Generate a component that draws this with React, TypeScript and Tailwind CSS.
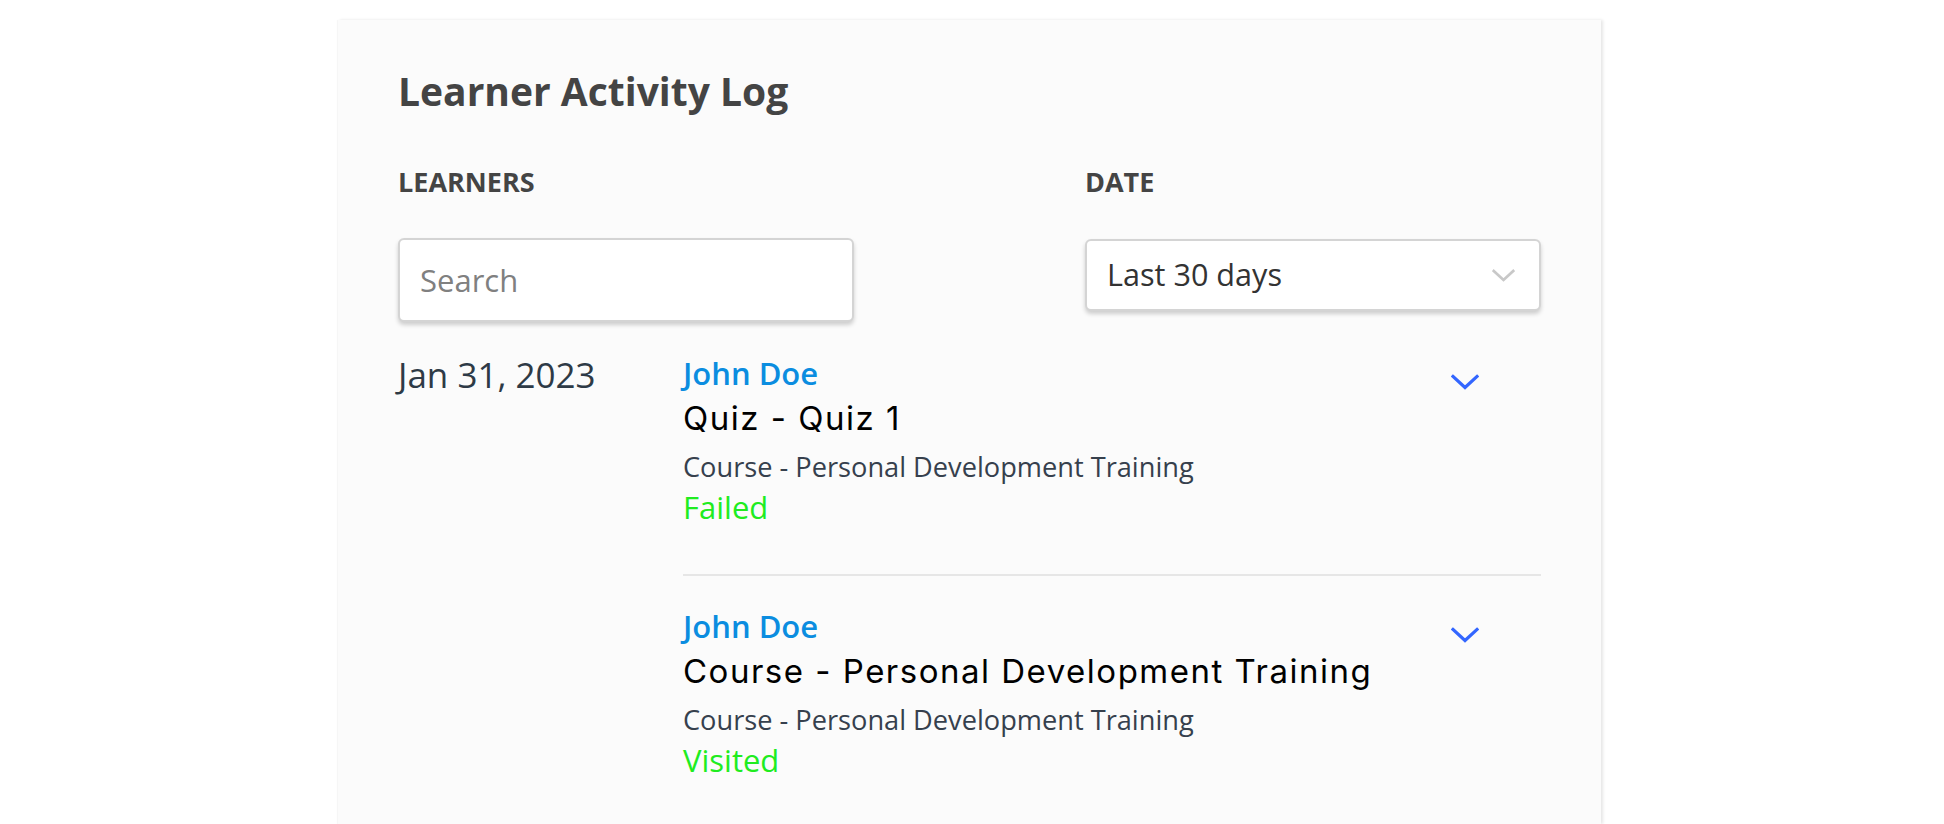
import React from 'react';

type Activity = {
  learner: string;
  title: string;
  course: string;
  status: string;
};

const activities: Activity[] = [
  { learner: 'John Doe', title: 'Quiz - Quiz 1', course: 'Course - Personal Development Training', status: 'Failed' },
  { learner: 'John Doe', title: 'Course - Personal Development Training', course: 'Course - Personal Development Training', status: 'Visited' },
];

const ChevronDown = ({ className, width = 3.2 }: { className?: string; width?: number }) => (
  <svg viewBox="0 0 28 16" fill="none" stroke="currentColor" strokeWidth={width} strokeLinecap="square" className={className}>
    <path d="M2 2.5l12 11 12-11" />
  </svg>
);

const ActivityItem = ({ item, last }: { item: Activity; last: boolean }) => (
  <div className={last ? 'flex pt-[30px] pb-[40px]' : 'flex pb-[48px] border-b-2 border-[#e6e6e6]'}>
    <div className="flex-1 flex flex-col">
      <span className="text-[31px] leading-[40px] font-semibold text-[#0b8de0]">{item.learner}</span>
      <span className="text-[33px] leading-[50px] tracking-[1.5px] text-black font-['Inter',sans-serif]">{item.title}</span>
      <span className="text-[27.2px] leading-[44px] text-[#36404d] mt-[2px]">{item.course}</span>
      <span className="text-[31px] leading-[38px] text-[#20ec20] -mt-[1px]">{item.status}</span>
    </div>
    <div className="w-[90px] flex pt-[21px]">
      <ChevronDown className="w-[28px] h-[16px] text-[#3366ff]" />
    </div>
  </div>
);

export default function App() {
  return (
    <div className="min-h-screen bg-white flex justify-center pr-[5px] font-['Open_Sans','Noto_Sans',sans-serif]">
      <div className="w-[1263px] mt-[20px] bg-[#fbfbfb] shadow-[2px_0_3px_rgba(0,0,0,0.10),-1px_0_1px_rgba(0,0,0,0.03)] px-[60px] pt-[45px]">
        <h1 className="text-[39px] leading-[52px] font-bold text-[#444444]">Learner Activity Log</h1>

        <div className="flex justify-between mt-[47px]">
          <div className="w-[456px] flex flex-col">
            <label className="text-[27px] leading-[36px] font-bold text-[#444444]">LEARNERS</label>
            <div className="mt-[38px] h-[84px] rounded-[6px] border-2 border-[#d4d4d4] bg-white shadow-[0_3px_4px_rgba(0,0,0,0.18)] flex items-center px-[20px]">
              <span className="text-[31px] text-[#808080]">Search</span>
            </div>
          </div>
          <div className="w-[456px] flex flex-col">
            <label className="text-[27px] leading-[36px] font-bold text-[#444444]">DATE</label>
            <div className="mt-[39px] h-[72px] rounded-[6px] border-2 border-[#d4d4d4] bg-white shadow-[0_3px_4px_rgba(0,0,0,0.18)] flex items-center justify-between pl-[20px] pr-[24px]">
              <span className="text-[30.6px] text-[#333333]">Last 30 days</span>
              <ChevronDown className="w-[23px] h-[13px] text-[#c8c8c8]" width={3.4} />
            </div>
          </div>
        </div>

        <div className="flex mt-[31px]">
          <div className="w-[285px] text-[35px] leading-[44px] text-[#2e3a46]">Jan 31, 2023</div>
          <div className="flex-1 flex flex-col">
            {activities.map((a, i) => (
              <ActivityItem key={i} item={a} last={i === activities.length - 1} />
            ))}
          </div>
        </div>
      </div>
    </div>
  );
}
